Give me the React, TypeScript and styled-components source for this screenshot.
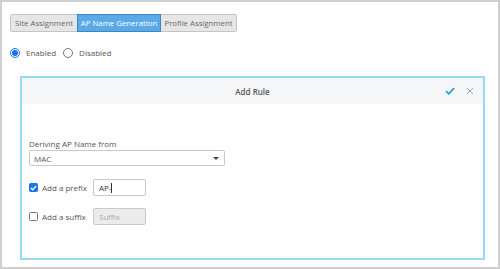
import React, { useState } from "react";
import styled, { createGlobalStyle, css } from "styled-components";

const GlobalStyle = createGlobalStyle`
  html, body {
    margin: 0;
    padding: 0;
    background: #ffffff;
  }
  body {
    font-family: "Open Sans", "Liberation Sans", sans-serif;
    color: #444;
  }
`;

const Frame = styled.div`
  box-sizing: border-box;
  width: 500px;
  height: 269px;
  border: 2px solid #cfcfcf;
  padding: 12px 8px 0 8px;
  background: #fff;
`;

const TabBar = styled.div`
  display: flex;
`;

const Tab = styled.button<{ active?: boolean; w: number }>`
  width: ${({ w }) => w}px;
  height: 18px;
  padding: 0;
  font-family: inherit;
  font-size: 7.8px;
  border: 1px solid #c4c4c4;
  background: #e6e6e6;
  color: #6a6a6a;
  margin-right: -1px;
  white-space: nowrap;
  cursor: pointer;
  &:first-child {
    border-radius: 2px 0 0 2px;
  }
  &:last-child {
    border-radius: 0 2px 2px 0;
  }
  ${({ active }) =>
    active &&
    css`
      position: relative;
      z-index: 1;
      background: #5aaae8;
      border-color: #3b87c4;
      color: #fff;
    `}
`;

const RadioRow = styled.div`
  display: flex;
  align-items: center;
  margin-top: 15px;
  font-size: 8px;
  color: #555;
`;

const RadioLabel = styled.label`
  display: flex;
  align-items: center;
  margin-right: 7px;
  cursor: pointer;
`;

const RadioDot = styled.span<{ checked?: boolean }>`
  box-sizing: border-box;
  width: 10px;
  height: 10px;
  border-radius: 50%;
  margin-right: 6px;
  border: 1px solid ${({ checked }) => (checked ? "#1a73e8" : "#777")};
  background: #fff;
  display: flex;
  align-items: center;
  justify-content: center;
  &::after {
    content: "";
    width: 6px;
    height: 6px;
    border-radius: 50%;
    background: ${({ checked }) => (checked ? "#1a73e8" : "transparent")};
  }
`;

const Panel = styled.div`
  box-sizing: border-box;
  width: 465px;
  height: 184px;
  margin: 18px 0 0 10px;
  border: 2px solid #97daf6;
  display: flex;
  flex-direction: column;
`;

const PanelHeader = styled.div`
  height: 26px;
  background: #f5f6f8;
  display: flex;
  align-items: center;
  justify-content: center;
  position: relative;
  font-size: 8px;
  font-weight: 600;
  color: #555;
`;

const HeaderActions = styled.div`
  position: absolute;
  right: 9px;
  top: 0;
  bottom: 0;
  display: flex;
  align-items: center;
  gap: 11px;
`;

const PanelBody = styled.div`
  padding: 34px 0 0 7px;
  font-size: 8px;
  color: #555;
`;

const FieldLabel = styled.div`
  margin-bottom: 1px;
`;

const Select = styled.div`
  box-sizing: border-box;
  width: 196px;
  height: 16px;
  border: 1px solid #c9c9c9;
  border-radius: 2px;
  display: flex;
  align-items: center;
  justify-content: space-between;
  padding: 0 5px 0 4px;
  color: #555;
`;

const Caret = styled.span`
  width: 0;
  height: 0;
  border-left: 3px solid transparent;
  border-right: 3px solid transparent;
  border-top: 3px solid #444;
`;

const OptionRow = styled.div<{ first?: boolean }>`
  display: flex;
  align-items: center;
  margin-top: ${({ first }) => (first ? "13px" : "12px")};
`;

const Check = styled.span<{ checked?: boolean }>`
  box-sizing: border-box;
  width: 9px;
  height: 9px;
  border-radius: 1.5px;
  margin-right: 4px;
  display: flex;
  align-items: center;
  justify-content: center;
  ${({ checked }) =>
    checked
      ? css`
          background: #1a73e8;
          border: 1px solid #1a73e8;
        `
      : css`
          background: #fff;
          border: 1px solid #777;
        `}
`;

const OptionText = styled.span`
  width: 51px;
`;

const TextBox = styled.div<{ disabled?: boolean }>`
  box-sizing: border-box;
  width: 53px;
  height: 17px;
  border: 1px solid #c9c9c9;
  border-radius: 2px;
  display: flex;
  align-items: center;
  padding-left: 5px;
  background: ${({ disabled }) => (disabled ? "#ececec" : "#fff")};
  color: ${({ disabled }) => (disabled ? "#aaa" : "#333")};
`;

const Cursor = styled.span`
  display: inline-block;
  width: 1px;
  height: 10px;
  background: #333;
`;

export default function App() {
  const [tab, setTab] = useState(1);
  const [enabled, setEnabled] = useState(true);
  const tabs: [string, number][] = [
    ["Site Assignment", 68],
    ["AP Name Generation", 84],
    ["Profile Assignment", 77],
  ];

  return (
    <>
      <GlobalStyle />
      <Frame>
        <TabBar>
          {tabs.map(([t, w], i) => (
            <Tab key={t} w={w} active={i === tab} onClick={() => setTab(i)}>
              {t}
            </Tab>
          ))}
        </TabBar>
        <RadioRow>
          <RadioLabel onClick={() => setEnabled(true)}>
            <RadioDot checked={enabled} />
            Enabled
          </RadioLabel>
          <RadioLabel onClick={() => setEnabled(false)}>
            <RadioDot checked={!enabled} />
            Disabled
          </RadioLabel>
        </RadioRow>
        <Panel>
          <PanelHeader>
            Add Rule
            <HeaderActions>
              <svg width="10" height="8" viewBox="0 0 10 8">
                <path d="M1 4.2 L3.8 6.8 L9 1.2" fill="none" stroke="#2f9be4" strokeWidth="1.8" />
              </svg>
              <svg width="8" height="8" viewBox="0 0 8 8">
                <path d="M1 1 L7 7 M7 1 L1 7" stroke="#9a9a9a" strokeWidth="0.9" />
              </svg>
            </HeaderActions>
          </PanelHeader>
          <PanelBody>
            <FieldLabel>Deriving AP Name from</FieldLabel>
            <Select>
              MAC
              <Caret />
            </Select>
            <OptionRow first>
              <Check checked>
                <svg width="7" height="6" viewBox="0 0 7 6">
                  <path d="M0.8 3 L2.7 4.8 L6.2 0.9" fill="none" stroke="#fff" strokeWidth="1.3" />
                </svg>
              </Check>
              <OptionText>Add a prefix</OptionText>
              <TextBox>
                AP-
                <Cursor />
              </TextBox>
            </OptionRow>
            <OptionRow>
              <Check />
              <OptionText>Add a suffix</OptionText>
              <TextBox disabled>Suffix</TextBox>
            </OptionRow>
          </PanelBody>
        </Panel>
      </Frame>
    </>
  );
}
